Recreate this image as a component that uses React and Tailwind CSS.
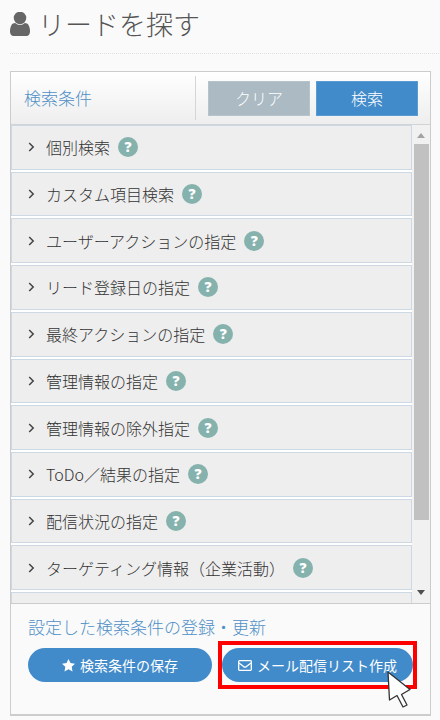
import React from "react";

const conditions = [
  "個別検索",
  "カスタム項目検索",
  "ユーザーアクションの指定",
  "リード登録日の指定",
  "最終アクションの指定",
  "管理情報の指定",
  "管理情報の除外指定",
  "ToDo／結果の指定",
  "配信状況の指定",
  "ターゲティング情報（企業活動）",
];

function UserIcon() {
  return (
    <svg viewBox="0 128 1280 1536" className="h-6 w-5 shrink-0 fill-[#666]" aria-hidden="true">
      <path d="M1280 1399q0 109-62.5 187t-150.5 78h-854q-88 0-150.5-78t-62.5-187q0-85 8.5-160.5t31.5-152 58.5-131 94-89 134.5-34.5q131 128 313 128t313-128q76 0 134.5 34.5t94 89 58.5 131 31.5 152 8.5 160.5z" />
      <circle cx="640" cy="512" r="400" />
    </svg>
  );
}

function StarIcon() {
  return (
    <svg viewBox="0 0 24 24" className="size-[13px] shrink-0 fill-white" aria-hidden="true">
      <path d="M12 0l3.6 7.6 8.4 1.1-6.1 5.8 1.5 8.5L12 19l-7.4 4 1.5-8.5L0 8.7l8.4-1.1z" />
    </svg>
  );
}

function EnvelopeIcon() {
  return (
    <svg viewBox="0 0 14 11" className="h-[11px] w-[14px] shrink-0 fill-none stroke-white" aria-hidden="true">
      <rect x="0.7" y="0.7" width="12.6" height="9.6" rx="0.8" strokeWidth="1.3" />
      <path d="M1 3l4.6 3.6q1.4 1 2.8 0L13 3" strokeWidth="1.3" />
    </svg>
  );
}

function Condition({ label }) {
  return (
    <li className="flex items-center border border-[#ccd9e4] bg-[#eee] pl-4">
      <button type="button" className="flex items-center gap-[11px] text-base leading-6 text-[#333]">
        <svg viewBox="0 0 7 10" className="h-[10px] w-[7px] fill-none stroke-[#444]" aria-hidden="true">
          <path d="M1.2 1l4 4-4 4" strokeWidth="1.5" />
        </svg>
        {label}
      </button>
      <button
        type="button"
        aria-label={label + " ヘルプ"}
        className="ml-2 flex size-5 items-center justify-center rounded-full bg-[#86b2ae] font-['Open_Sans',sans-serif] text-sm font-extrabold leading-5 text-white"
      >
        ?
      </button>
    </li>
  );
}

export default function App() {
  return (
    <main className="min-h-screen bg-[#fafafa] pt-[6px] pr-[9px] pb-1 pl-[10px] font-['Noto_Sans_CJK_JP',sans-serif] font-light">
      <h1 className="flex h-9 items-center gap-2 text-[27px] leading-9 text-[#555]">
        <UserIcon />
        リードを探す
      </h1>
      <hr className="mt-[11px] -mr-2 border-0 border-t border-dotted border-[#e0e0e0]" />

      <section className="mt-[17px] border border-b-2 border-[#ccc]">
        <header className="flex h-[53px] items-stretch border-b border-[#d0d4d7] bg-linear-to-b from-white to-[#eee]">
          <h2 className="my-1 flex w-[185px] items-center border-r border-[#d5d5d5] pl-[13px] text-[17px] leading-6 text-[#4f8fc6]">
            検索条件
          </h2>
          <div className="flex flex-1 items-center gap-[6px] px-3 text-base leading-6 text-white">
            <button type="button" className="h-[35px] flex-1 border border-[#b7c3cb] bg-[#abbac3]">クリア</button>
            <button type="button" className="h-[35px] flex-1 border border-[#5a9bd3] bg-[#428bca]">検索</button>
          </div>
        </header>

        <div className="flex h-[479px] border-b border-[#ccc] bg-white">
          <div className="flex-1 overflow-hidden">
            <ul className="grid h-[465px] grid-rows-10 gap-[2px]">
              {conditions.map((label) => (
                <Condition key={label} label={label} />
              ))}
            </ul>
            <div className="mt-[2px] h-11 border border-[#ccd9e4] bg-[#eee]" />
          </div>
          <div className="flex w-[18px] flex-col items-center bg-[#f1f1f1]" aria-hidden="true">
            <svg viewBox="0 0 8 5" className="mt-2 h-[5px] w-2 fill-[#a3a3a3]"><path d="M0 5l4-5 4 5z" /></svg>
            <div className="mt-[6px] h-[376px] w-[15px] bg-[#c1c1c1]" />
            <svg viewBox="0 0 8 5" className="mt-auto mb-2 h-[5px] w-2 fill-[#505050]"><path d="M0 0l4 5 4-5z" /></svg>
          </div>
        </div>

        <footer className="pt-[11px] pr-[13px] pb-[25px] pl-[17px]">
          <h2 className="text-[17px] leading-6 text-[#4f8fc6]">設定した検索条件の登録・更新</h2>
          <div className="mt-[2px] flex items-center gap-[6px] text-sm leading-5 font-normal text-white">
            <button type="button" className="flex h-[34px] flex-1 items-center justify-center gap-[5px] rounded-full bg-[#428bca]">
              <StarIcon />
              検索条件の保存
            </button>
            <div className="relative border-4 border-[#fe0000] py-[3px]">
              <button type="button" className="flex h-[34px] w-[191px] items-center justify-center gap-[5px] rounded-full bg-[#428bca]">
                <EnvelopeIcon />
                メール配信リスト作成
              </button>
              <svg viewBox="0 0 25 37" className="absolute right-px -bottom-[23px] h-[37px] w-[25px]" aria-hidden="true">
                <path d="M1 1l1.5 28 7.5-4.5 6 11.5 4-2-5.5-10.5 8.5-5z" fill="#fff" stroke="#333" strokeWidth="1.3" strokeLinejoin="round" />
              </svg>
            </div>
          </div>
        </footer>
      </section>
    </main>
  );
}
